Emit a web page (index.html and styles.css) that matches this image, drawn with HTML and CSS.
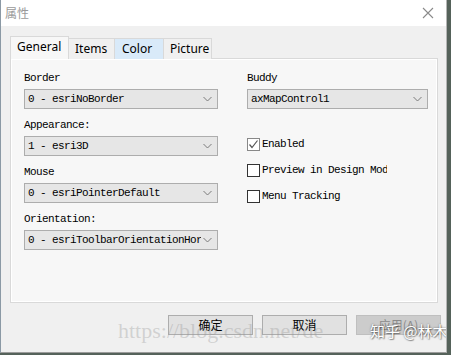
FILE: index.html
```html
<!DOCTYPE html>
<html>
<head>
<meta charset="utf-8">
<link rel="stylesheet" href="styles.css">
</head>
<body>
<div class="window">
  <div class="titlebar">
    <span class="title">属性</span>
    <svg class="close" width="12" height="12" viewBox="0 0 12 12"><path d="M1 1L11 11M11 1L1 11" stroke="#8a8a8a" stroke-width="1.1" fill="none"/></svg>
  </div>
  <div class="content">
    <div class="tabs">
      <div class="tab active">General</div>
      <div class="tab">Items</div>
      <div class="tab hover">Color</div>
      <div class="tab">Picture</div>
    </div>
    <div class="panel">
      <div class="col col-left">
        <div class="field">
          <div class="lbl">Border</div>
          <div class="select"><span class="val">0 - esriNoBorder</span><svg class="chev" width="9" height="6" viewBox="0 0 9 6"><path d="M0.5 1L4.5 5L8.5 1" stroke="#7a7a7a" fill="none"/></svg></div>
        </div>
        <div class="field">
          <div class="lbl">Appearance:</div>
          <div class="select"><span class="val">1 - esri3D</span><svg class="chev" width="9" height="6" viewBox="0 0 9 6"><path d="M0.5 1L4.5 5L8.5 1" stroke="#7a7a7a" fill="none"/></svg></div>
        </div>
        <div class="field">
          <div class="lbl">Mouse</div>
          <div class="select"><span class="val">0 - esriPointerDefault</span><svg class="chev" width="9" height="6" viewBox="0 0 9 6"><path d="M0.5 1L4.5 5L8.5 1" stroke="#7a7a7a" fill="none"/></svg></div>
        </div>
        <div class="field">
          <div class="lbl">Orientation:</div>
          <div class="select"><span class="val">0 - esriToolbarOrientationHorizontal</span><svg class="chev" width="9" height="6" viewBox="0 0 9 6"><path d="M0.5 1L4.5 5L8.5 1" stroke="#7a7a7a" fill="none"/></svg></div>
        </div>
      </div>
      <div class="col col-right">
        <div class="field">
          <div class="lbl">Buddy</div>
          <div class="select"><span class="val">axMapControl1</span><svg class="chev" width="9" height="6" viewBox="0 0 9 6"><path d="M0.5 1L4.5 5L8.5 1" stroke="#7a7a7a" fill="none"/></svg></div>
        </div>
        <div class="checks">
          <div class="check"><span class="box checked"><svg width="11" height="11" viewBox="0 0 11 11"><path d="M1.5 5.5L4 8.5L9.5 1.5" stroke="#555" stroke-width="1.2" fill="none"/></svg></span><span class="clabel">Enabled</span></div>
          <div class="check"><span class="box"></span><span class="clabel clip">Preview in Design Mode</span></div>
          <div class="check"><span class="box"></span><span class="clabel">Menu Tracking</span></div>
        </div>
      </div>
    </div>
    <div class="buttons">
      <div class="btn">确定</div>
      <div class="btn">取消</div>
      <div class="btn disabled">应用(A)</div>
    </div>
  </div>
  <div class="watermark">https://blog.csdn.net/de</div>
  <div class="zhihu">知乎 @林木</div>
</div>
</body>
</html>
```

FILE: styles.css
```css
html, body {
  margin: 0;
  padding: 0;
}
body {
  background: #55625a;
  width: 451px;
  height: 355px;
  overflow: hidden;
}
.window {
  position: relative;
  width: 445px;
  height: 352px;
  background: #f0f0f0;
  border-left: 1px solid #8b99a5;
  border-right: 1px solid #b5b5b5;
  border-bottom: 1px solid #9c9c9c;
  overflow: hidden;
}
.titlebar {
  height: 26px;
  background: #fff;
  display: flex;
  align-items: center;
  justify-content: space-between;
  padding: 0 12px 0 4px;
}
.title {
  font-family: "Noto Sans CJK SC", sans-serif;
  font-size: 12px;
  color: #9a9a9a;
  line-height: 14px;
  margin-top: -1px;
}
.content {
  padding: 10px 0 0 9px;
}
.tabs {
  display: flex;
  align-items: flex-end;
  height: 23px;
  position: relative;
  z-index: 1;
  margin-bottom: -1px;
}
.tab {
  box-sizing: border-box;
  height: 21px;
  border: 1px solid #d9d9d9;
  border-bottom: none;
  border-left: none;
  background: #f0f0f0;
  font-family: "Noto Sans", sans-serif;
  font-size: 12px;
  line-height: 19px;
  color: #000;
  padding: 0 6px;
}
.tab.active {
  height: 23px;
  border-left: 1px solid #d9d9d9;
  background: #f7f7f7;
  padding: 1px 6px 0;
  line-height: 18px;
  width: 59px;
}
.tab:nth-child(2) { width: 46px; }
.tab.hover {
  background: #d9eaf9;
  width: 49px;
  padding-left: 7px;
}
.tab:nth-child(4) { width: 48px; }
.panel {
  box-sizing: border-box;
  width: 428px;
  height: 245px;
  border: 1px solid #d9d9d9;
  box-shadow: inset 1px 1px 0 #fff, inset -1px -1px 0 #fff;
  background: #f7f7f7;
  display: flex;
  gap: 29px;
  padding: 13px 9px 0 13px;
}
.col {
  display: flex;
  flex-direction: column;
}
.col-left { width: 194px; gap: 10px; }
.col-right { width: 182px; }
.field {
  display: flex;
  flex-direction: column;
  gap: 4px;
}
.lbl, .val, .clabel {
  font-family: "Liberation Mono", monospace;
  font-size: 11px;
  letter-spacing: -0.6px;
  line-height: 13px;
  color: #000;
  white-space: nowrap;
}
.select {
  box-sizing: border-box;
  height: 20px;
  border: 1px solid #adadad;
  background: #e6e6e6;
  display: flex;
  align-items: center;
  padding: 0 5px 0 3px;
  gap: 2px;
}
.val {
  flex: 1;
  overflow: hidden;
}
.chev {
  flex: none;
}
.checks {
  display: flex;
  flex-direction: column;
  gap: 12px;
  margin-top: 28px;
}
.check {
  display: flex;
  align-items: center;
  gap: 2px;
  height: 14px;
}
.box {
  box-sizing: border-box;
  width: 13px;
  height: 13px;
  border: 1px solid #333;
  background: #fff;
  display: flex;
  align-items: center;
  justify-content: center;
}
.box.checked {
  border-color: #888;
}
.clip {
  width: 125px;
  overflow: hidden;
}
.buttons {
  display: flex;
  gap: 9px;
  margin: 12px 0 0 158px;
}
.btn {
  box-sizing: border-box;
  width: 85px;
  height: 20px;
  border: 1px solid #adadad;
  background: #e1e1e1;
  font-family: "Noto Sans CJK SC", sans-serif;
  font-size: 12px;
  line-height: 18px;
  text-align: center;
  color: #000;
}
.btn.disabled {
  background: #cccccc;
  border-color: #bfbfbf;
  color: #8a8a8a;
}
.watermark {
  position: absolute;
  left: 117px;
  top: 318px;
  font-family: "Liberation Serif", serif;
  font-size: 22px;
  line-height: 26px;
  color: rgba(150, 150, 150, 0.35);
  white-space: nowrap;
  pointer-events: none;
}
.zhihu {
  position: absolute;
  left: 369px;
  top: 322px;
  font-family: "Noto Sans CJK SC", sans-serif;
  font-size: 15px;
  line-height: 18px;
  color: #fff;
  text-shadow: 0 0 2px rgba(0,0,0,0.55), 1px 1px 1px rgba(0,0,0,0.35);
  white-space: nowrap;
}
```
